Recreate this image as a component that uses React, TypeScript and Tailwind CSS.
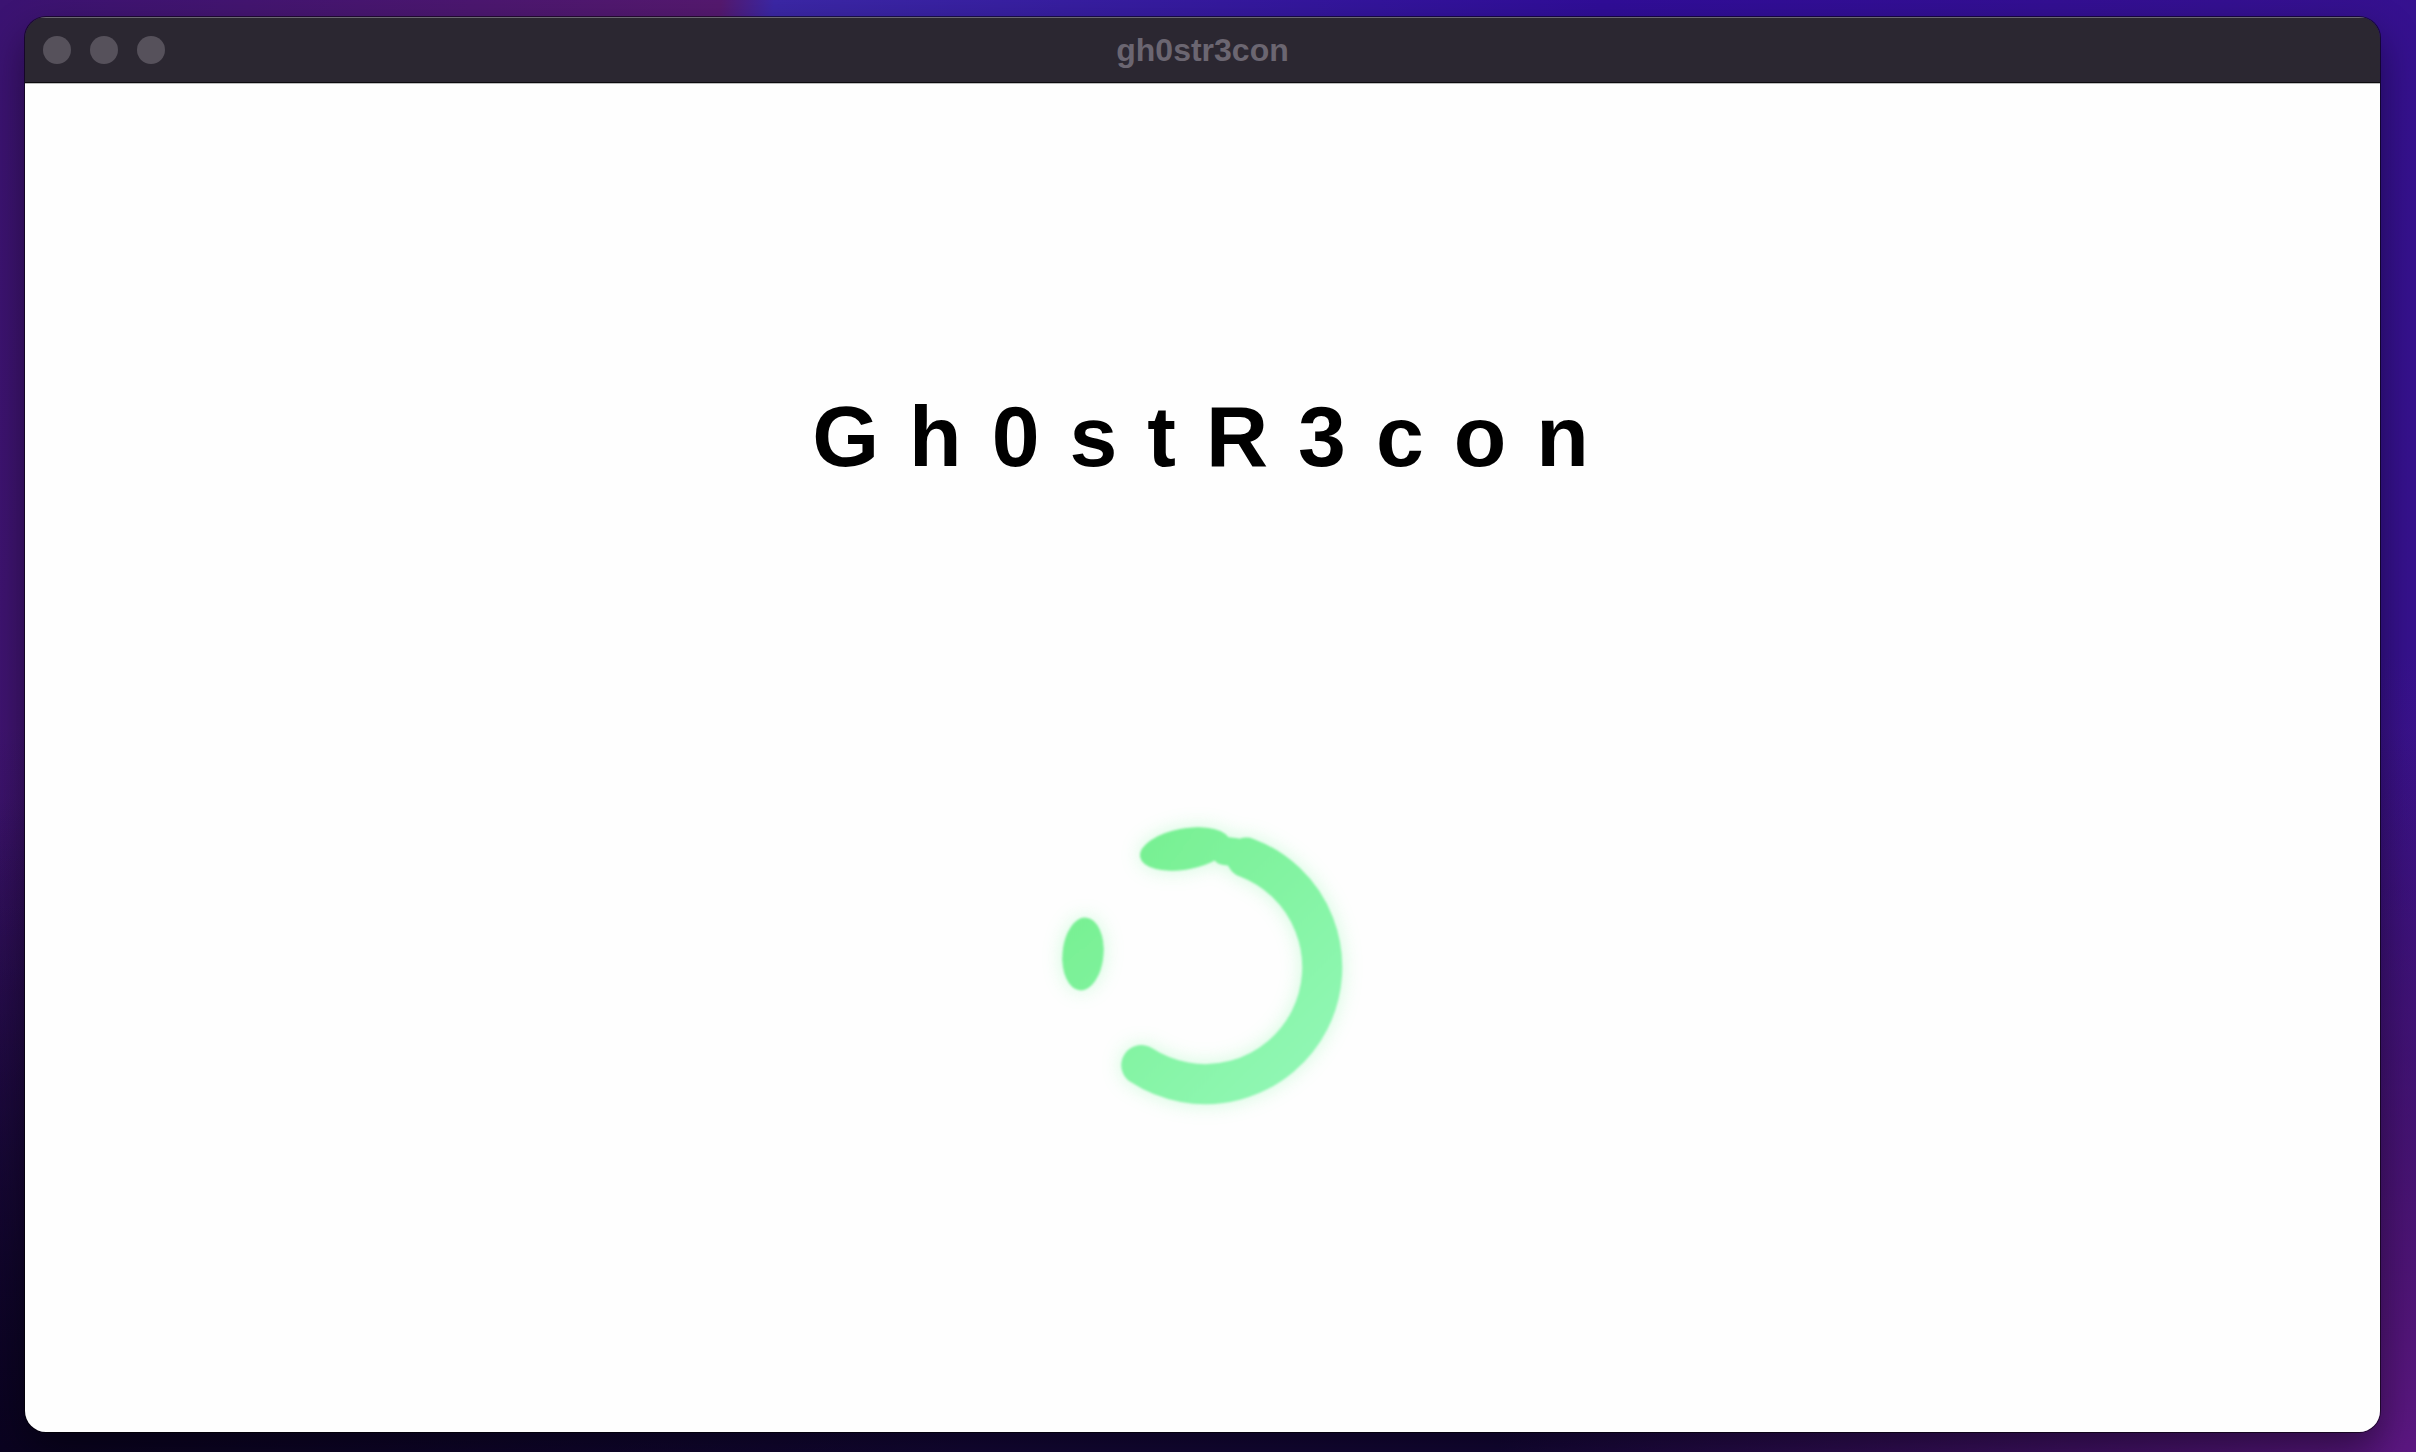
export default function App() {
  const shapes = (
    <>
      <path
        d="M241.4 90.6 A117 117 0 1 1 136.3 298.1"
        fill="none"
        strokeWidth={40}
        strokeLinecap="round"
      />
      <path
        d="M220 84 A121 121 0 0 1 258 93"
        fill="none"
        strokeWidth={28}
        strokeLinecap="round"
      />
      <ellipse cx={180} cy={82} rx={45} ry={20} transform="rotate(-10 180 82)" />
      <ellipse cx={78} cy={187} rx={20} ry={36} transform="rotate(5 78 187)" />
    </>
  );
  return (
    <div className="w-[2416px] h-[1452px] overflow-hidden pt-[17px] pl-[25px] bg-[radial-gradient(ellipse_38%_55%_at_100%_100%,#5c1782_0%,transparent_100%),radial-gradient(ellipse_40%_45%_at_0%_100%,#0a0320_0%,transparent_100%),linear-gradient(to_bottom,transparent_50%,#140738_100%),linear-gradient(100deg,#3b1372_0%,#55196f_27%,#3b27a6_29%,#300d98_60%,#37128c_100%)]">
      <div className="w-[2355px] h-[1415px] rounded-[21px] overflow-hidden flex flex-col shadow-[0_0_0_1px_rgba(0,0,0,0.55),0_18px_40px_rgba(0,0,0,0.45)]">
        <div className="h-[66px] shrink-0 bg-[#2b2731] border-t border-t-[#6a6770] border-b border-b-[#0c0b0e] grid grid-cols-[1fr_auto_1fr] items-center">
          <div className="flex gap-[19px] pl-[18px]">
            <div className="w-[28px] h-[28px] rounded-full bg-[#56515b]" />
            <div className="w-[28px] h-[28px] rounded-full bg-[#56515b]" />
            <div className="w-[28px] h-[28px] rounded-full bg-[#56515b]" />
          </div>
          <div className="text-[32px] leading-none font-bold text-[#6b6671] font-['Liberation_Sans',Arial,sans-serif]">
            gh0str3con
          </div>
          <div />
        </div>
        <div className="flex-1 bg-[#fefefe] border-t border-t-[#bdbdbd] flex flex-col items-center">
          <div className="pt-[309px] pl-[26px]">
            <div className="text-[86px] leading-[86px] font-bold text-black tracking-[30px] whitespace-nowrap font-['Liberation_Sans',Arial,sans-serif]">
              Gh0stR3con
            </div>
          </div>
          <svg
            className="shrink-0 ml-[5px] mt-[288px]"
            width={400}
            height={400}
            viewBox="0 0 400 400"
          >
            <defs>
              <linearGradient id="g" gradientUnits="userSpaceOnUse" x1="60" y1="60" x2="340" y2="340">
                <stop offset="0%" stopColor="#72ef8b" />
                <stop offset="100%" stopColor="#95f8ba" />
              </linearGradient>
              <filter id="glow" x="-30%" y="-30%" width="160%" height="160%">
                <feGaussianBlur stdDeviation="10" />
              </filter>
              <filter id="soft" x="-10%" y="-10%" width="120%" height="120%">
                <feGaussianBlur stdDeviation="0.8" />
              </filter>
            </defs>
            <g fill="#7af59c" stroke="#7af59c" opacity={0.35} filter="url(#glow)">
              {shapes}
            </g>
            <g fill="url(#g)" stroke="url(#g)" filter="url(#soft)">
              {shapes}
            </g>
          </svg>
        </div>
      </div>
    </div>
  );
}
